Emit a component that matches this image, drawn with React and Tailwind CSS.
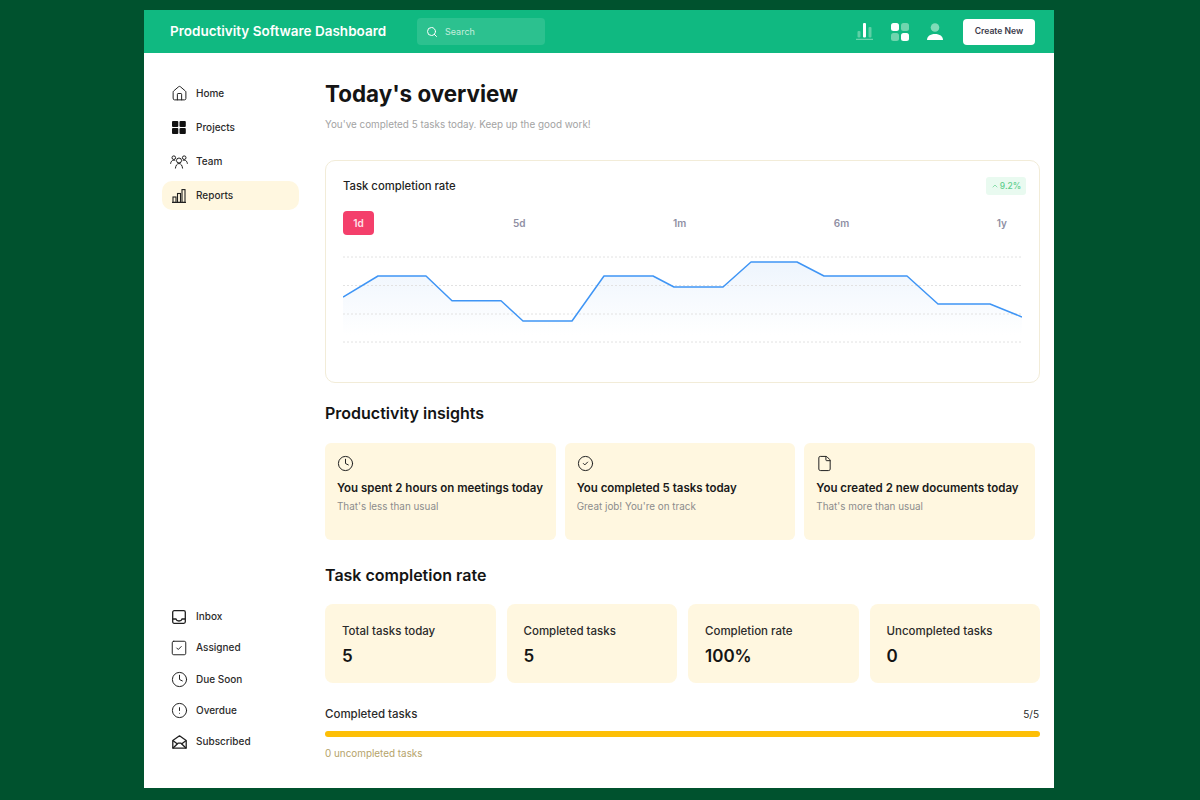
import React from 'react';
import { Search, House, SquareCheck, Clock, CircleAlert, CircleCheck, File, ChevronUp } from 'lucide-react';

const TeamIcon = () => (
  <svg width="18" height="14" viewBox="0 0 18 14" fill="none" stroke="#1f1f1f" strokeWidth="1">
    <circle cx="9" cy="5.500" r="2.500" />
    <path d="M5.400 13.500c.3-2.900 1.600-5 3.600-5s3.300 2.100 3.600 5" />
    <circle cx="3.800" cy="2.700" r="1.800" />
    <path d="M.6 8.800c.2-2.200 1.300-3.600 3.200-3.600.5 0 1 .1 1.500.4" />
    <circle cx="14.200" cy="2.700" r="1.800" />
    <path d="M17.400 8.800c-.2-2.200-1.300-3.600-3.200-3.600-.5 0-1 .1-1.500.4" />
  </svg>
);

const BarsIcon = () => (
  <svg width="14" height="14" viewBox="0 0 14 14" fill="none" stroke="#1f1f1f" strokeWidth="1.100">
    <path d="M0 13.400h14" />
    <rect x="1" y="8" width="3" height="5.400" />
    <rect x="5.500" y="4.500" width="3" height="8.900" />
    <rect x="10" y=".6" width="3" height="12.800" />
  </svg>
);

const ProjectsIcon = () => (
  <svg width="14" height="13" viewBox="0 0 14 13" fill="#111111">
    <rect x="0" y="0" width="6.300" height="6" rx="1" />
    <rect x="7.500" y="0" width="6.300" height="6" rx="1" />
    <rect x="0" y="7" width="6.300" height="6" rx="1" />
    <rect x="7.500" y="7" width="6.300" height="6" rx="1" />
  </svg>
);

const InboxIcon = () => (
  <svg width="14" height="14" viewBox="0 0 14 14" fill="none" stroke="#1f1f1f" strokeWidth="1.300">
    <rect x=".7" y=".7" width="12.600" height="12.600" rx="1.500" />
    <path d="M.7 9h3.200c.4 1.300 1.600 2 3.100 2s2.700-.7 3.100-2h3.200" />
  </svg>
);

const MailIcon = () => (
  <svg width="15" height="14" viewBox="0 0 15 14" fill="none" stroke="#1f1f1f" strokeWidth="1.300" strokeLinejoin="round">
    <path d="M.8 5.500 7.500.8l6.700 4.700v7.700H.8z" />
    <path d="M.8 13.200 6 8.200h3l5.200 5" />
    <path d="M.8 5.500 5.500 9M14.200 5.500 9.500 9" />
  </svg>
);

const HeaderBars = () => (
  <svg width="17" height="17" viewBox="0 0 17 17">
    <rect x="0" y="15.800" width="17" height="1" fill="#7fdcb8" />
    <rect x="1.500" y="8" width="3" height="6.500" rx="1" fill="#5fd0a6" />
    <rect x="7" y="0" width="3" height="14.500" rx="1" fill="#ffffff" />
    <rect x="12.500" y="4" width="3" height="10.500" rx="1" fill="#5fd0a6" />
  </svg>
);

const HeaderGrid = () => (
  <svg width="18" height="18" viewBox="0 0 18 18">
    <rect x="0" y="0" width="8" height="8" rx="2.500" fill="#ffffff" />
    <rect x="10" y="0" width="8" height="8" rx="2.500" fill="#6fd5ae" />
    <rect x="0" y="10" width="8" height="8" rx="2.500" fill="#6fd5ae" />
    <rect x="10" y="10" width="8" height="8" rx="2.500" fill="#ffffff" />
  </svg>
);

const HeaderUser = () => (
  <svg width="16" height="17" viewBox="0 0 16 17">
    <circle cx="8" cy="4.500" r="4.300" fill="#7fdcb8" />
    <path d="M0 17c0-3.700 3.300-6 8-6s8 2.300 8 6z" fill="#ffffff" />
  </svg>
);

const topNav = [
  { label: 'Home', icon: <House size={17} strokeWidth={1.400} color="#1f1f1f" /> },
  { label: 'Projects', icon: <ProjectsIcon /> },
  { label: 'Team', icon: <TeamIcon /> },
  { label: 'Reports', icon: <BarsIcon />, active: true },
];

const bottomNav = [
  { label: 'Inbox', icon: <InboxIcon /> },
  { label: 'Assigned', icon: <SquareCheck size={18} strokeWidth={1.300} color="#1f1f1f" /> },
  { label: 'Due Soon', icon: <Clock size={17} strokeWidth={1.400} color="#1f1f1f" /> },
  { label: 'Overdue', icon: <CircleAlert size={17} strokeWidth={1.400} color="#1f1f1f" /> },
  { label: 'Subscribed', icon: <MailIcon /> },
];

const ranges = ['5d', '1m', '6m', '1y'];

const insights = [
  { icon: <Clock size={17} strokeWidth={1.400} color="#1f1f1f" />, title: 'You spent 2 hours on meetings today', sub: "That's less than usual" },
  { icon: <CircleCheck size={17} strokeWidth={1.400} color="#1f1f1f" />, title: 'You completed 5 tasks today', sub: "Great job! You're on track" },
  { icon: <File size={17} strokeWidth={1.400} color="#1f1f1f" />, title: 'You created 2 new documents today', sub: "That's more than usual" },
];

const stats = [
  { label: 'Total tasks today', value: '5' },
  { label: 'Completed tasks', value: '5' },
  { label: 'Completion rate', value: '100%' },
  { label: 'Uncompleted tasks', value: '0' },
];

// chart points, origin at the top left of the plot
const linePoints = '0,42 35,21 83,21 109,45.700 158,45.700 180,66 229,66 261,21 310,21 331,32 380,32 408,7 454,7 481,21 564,21 595,49 647,49 679,62';

const Chart = () => (
  <svg width="679" height="90" viewBox="0 0 679 90" className="block">
    <defs>
      <linearGradient id="area" x1="0" y1="0" x2="0" y2="1">
        <stop offset="0" stopColor="#eef5fd" />
        <stop offset="1" stopColor="#ffffff" />
      </linearGradient>
    </defs>
    <polygon points={`${linePoints} 679,80 0,80`} fill="url(#area)" />
    {[2, 30.500, 59, 87].map((y) => (
      <line key={y} x1="0" x2="679" y1={y} y2={y} stroke="#e2e2e2" strokeWidth="1" strokeDasharray="2 2" />
    ))}
    <polyline points={linePoints} fill="none" stroke="#3f95f5" strokeWidth="1.500" strokeLinejoin="round" />
  </svg>
);

const NavItem = ({ item, height }) => (
  <div className={`flex items-center gap-[8px] pl-[8px] rounded-[10px] ${height} ${item.active ? 'bg-[#fff7e0]' : ''}`}>
    <span className="w-[18px] flex justify-center">{item.icon}</span>
    <span className="text-[10px] font-medium text-[#2b2b2b]">{item.label}</span>
  </div>
);

export default function App() {
  return (
    <div className="w-[1200px] h-[800px] overflow-hidden bg-[#00522e] pt-[10px] pl-[144px] font-['Inter',sans-serif]">
      <div className="w-[910px] h-[778px] bg-white flex flex-col">
        {/* header */}
        <header className="h-[43px] bg-[#10b981] flex items-center pl-[26px] pr-[19px]">
          <div className="w-[247px] text-[13.500px] font-semibold text-white whitespace-nowrap">Productivity Software Dashboard</div>
          <div className="w-[128px] h-[27px] rounded-[4px] bg-[#2cc18f] flex items-center gap-[7px] pl-[9px]">
            <Search size={12} strokeWidth={2} color="#ffffff" />
            <span className="text-[9px] text-[#c5eedd]">Search</span>
          </div>
          <div className="ml-auto flex items-center">
            <HeaderBars />
            <span className="w-[18px]" />
            <HeaderGrid />
            <span className="w-[18px]" />
            <HeaderUser />
            <button className="ml-[20px] w-[72px] h-[26px] rounded-[4px] bg-white text-[8.600px] font-semibold text-[#3a3a4a]">Create New</button>
          </div>
        </header>

        <div className="flex-1 flex min-h-0">
          {/* sidebar */}
          <aside className="w-[181px] pl-[18px] pr-[26px] pt-[26px] pb-[33px] flex flex-col justify-between">
            <div className="flex flex-col gap-[5px]">
              {topNav.map((item) => (
                <NavItem key={item.label} item={item} height="h-[29px]" />
              ))}
            </div>
            <div className="flex flex-col gap-[5px]">
              {bottomNav.map((item) => (
                <NavItem key={item.label} item={item} height="h-[26.300px]" />
              ))}
            </div>
          </aside>

          {/* main */}
          <main className="w-[715px] pt-[26px]">
            <h1 className="text-[22.400px] leading-[29px] font-bold text-[#141414]">Today's overview</h1>
            <p className="mt-[10px] text-[9.900px] leading-[12px] text-[#a3a3a3]">You've completed 5 tasks today. Keep up the good work!</p>

            <section className="mt-[30px] h-[223px] rounded-[10px] border border-[#f2ecd8] pl-[17px] pr-[13px] pt-[16px]">
              <div className="flex items-center justify-between">
                <span className="text-[11.300px] font-medium text-[#1f1f1f]">Task completion rate</span>
                <span className="w-[40px] h-[18px] rounded-[3px] bg-[#e9faf0] flex items-center justify-center gap-[1px] text-[8.500px] font-medium text-[#5fcf8d]">
                  <ChevronUp size={8} strokeWidth={2} />9.2%
                </span>
              </div>
              <div className="mt-[16px] flex items-center gap-[147.500px]">
                <span className="mr-[-8.500px] w-[31px] h-[24px] rounded-[4px] bg-[#f43f6b] flex items-center justify-center text-[10px] font-semibold text-[#ffe3ea]">1d</span>
                {ranges.map((r) => (
                  <span key={r} className="text-[10px] font-semibold text-[#8f8fa3]">{r}</span>
                ))}
              </div>
              <div className="mt-[20px]">
                <Chart />
              </div>
            </section>

            <h2 className="mt-[21px] text-[16px] leading-[19px] font-semibold text-[#141414]">Productivity insights</h2>
            <div className="mt-[20px] w-[710px] grid grid-cols-3 gap-[9px]">
              {insights.map((c) => (
                <div key={c.title} className="h-[97px] rounded-[6px] bg-[#fff7e0] pl-[12px] pt-[12px]">
                  {c.icon}
                  <div className="mt-[9px] text-[11.500px] leading-[14px] font-semibold text-[#1a1a1a] whitespace-nowrap">{c.title}</div>
                  <div className="mt-[5px] text-[9.900px] leading-[12px] text-[#8c8c8c]">{c.sub}</div>
                </div>
              ))}
            </div>

            <h2 className="mt-[26px] text-[16px] leading-[19px] font-semibold text-[#141414]">Task completion rate</h2>
            <div className="mt-[19px] grid grid-cols-4 gap-[11px]">
              {stats.map((s) => (
                <div key={s.label} className="h-[79px] rounded-[8px] bg-[#fff7e0] pl-[17px] pt-[20px]">
                  <div className="text-[11.500px] leading-[14px] font-medium text-[#2b2b2b]">{s.label}</div>
                  <div className="mt-[7px] text-[17px] leading-[22px] font-semibold text-[#141414]">{s.value}</div>
                </div>
              ))}
            </div>

            <div className="mt-[24px] flex items-center justify-between pr-px text-[11.500px] leading-[14px] text-[#2b2b2b]">
              <span className="font-medium">Completed tasks</span>
              <span className="text-[10px]">5/5</span>
            </div>
            <div className="mt-[10px] h-[6px] rounded-full bg-[#fdbf06]" />
            <div className="mt-[10px] text-[9.900px] leading-[12px] text-[#b5a36a]">0 uncompleted tasks</div>
          </main>
        </div>
      </div>
    </div>
  );
}
